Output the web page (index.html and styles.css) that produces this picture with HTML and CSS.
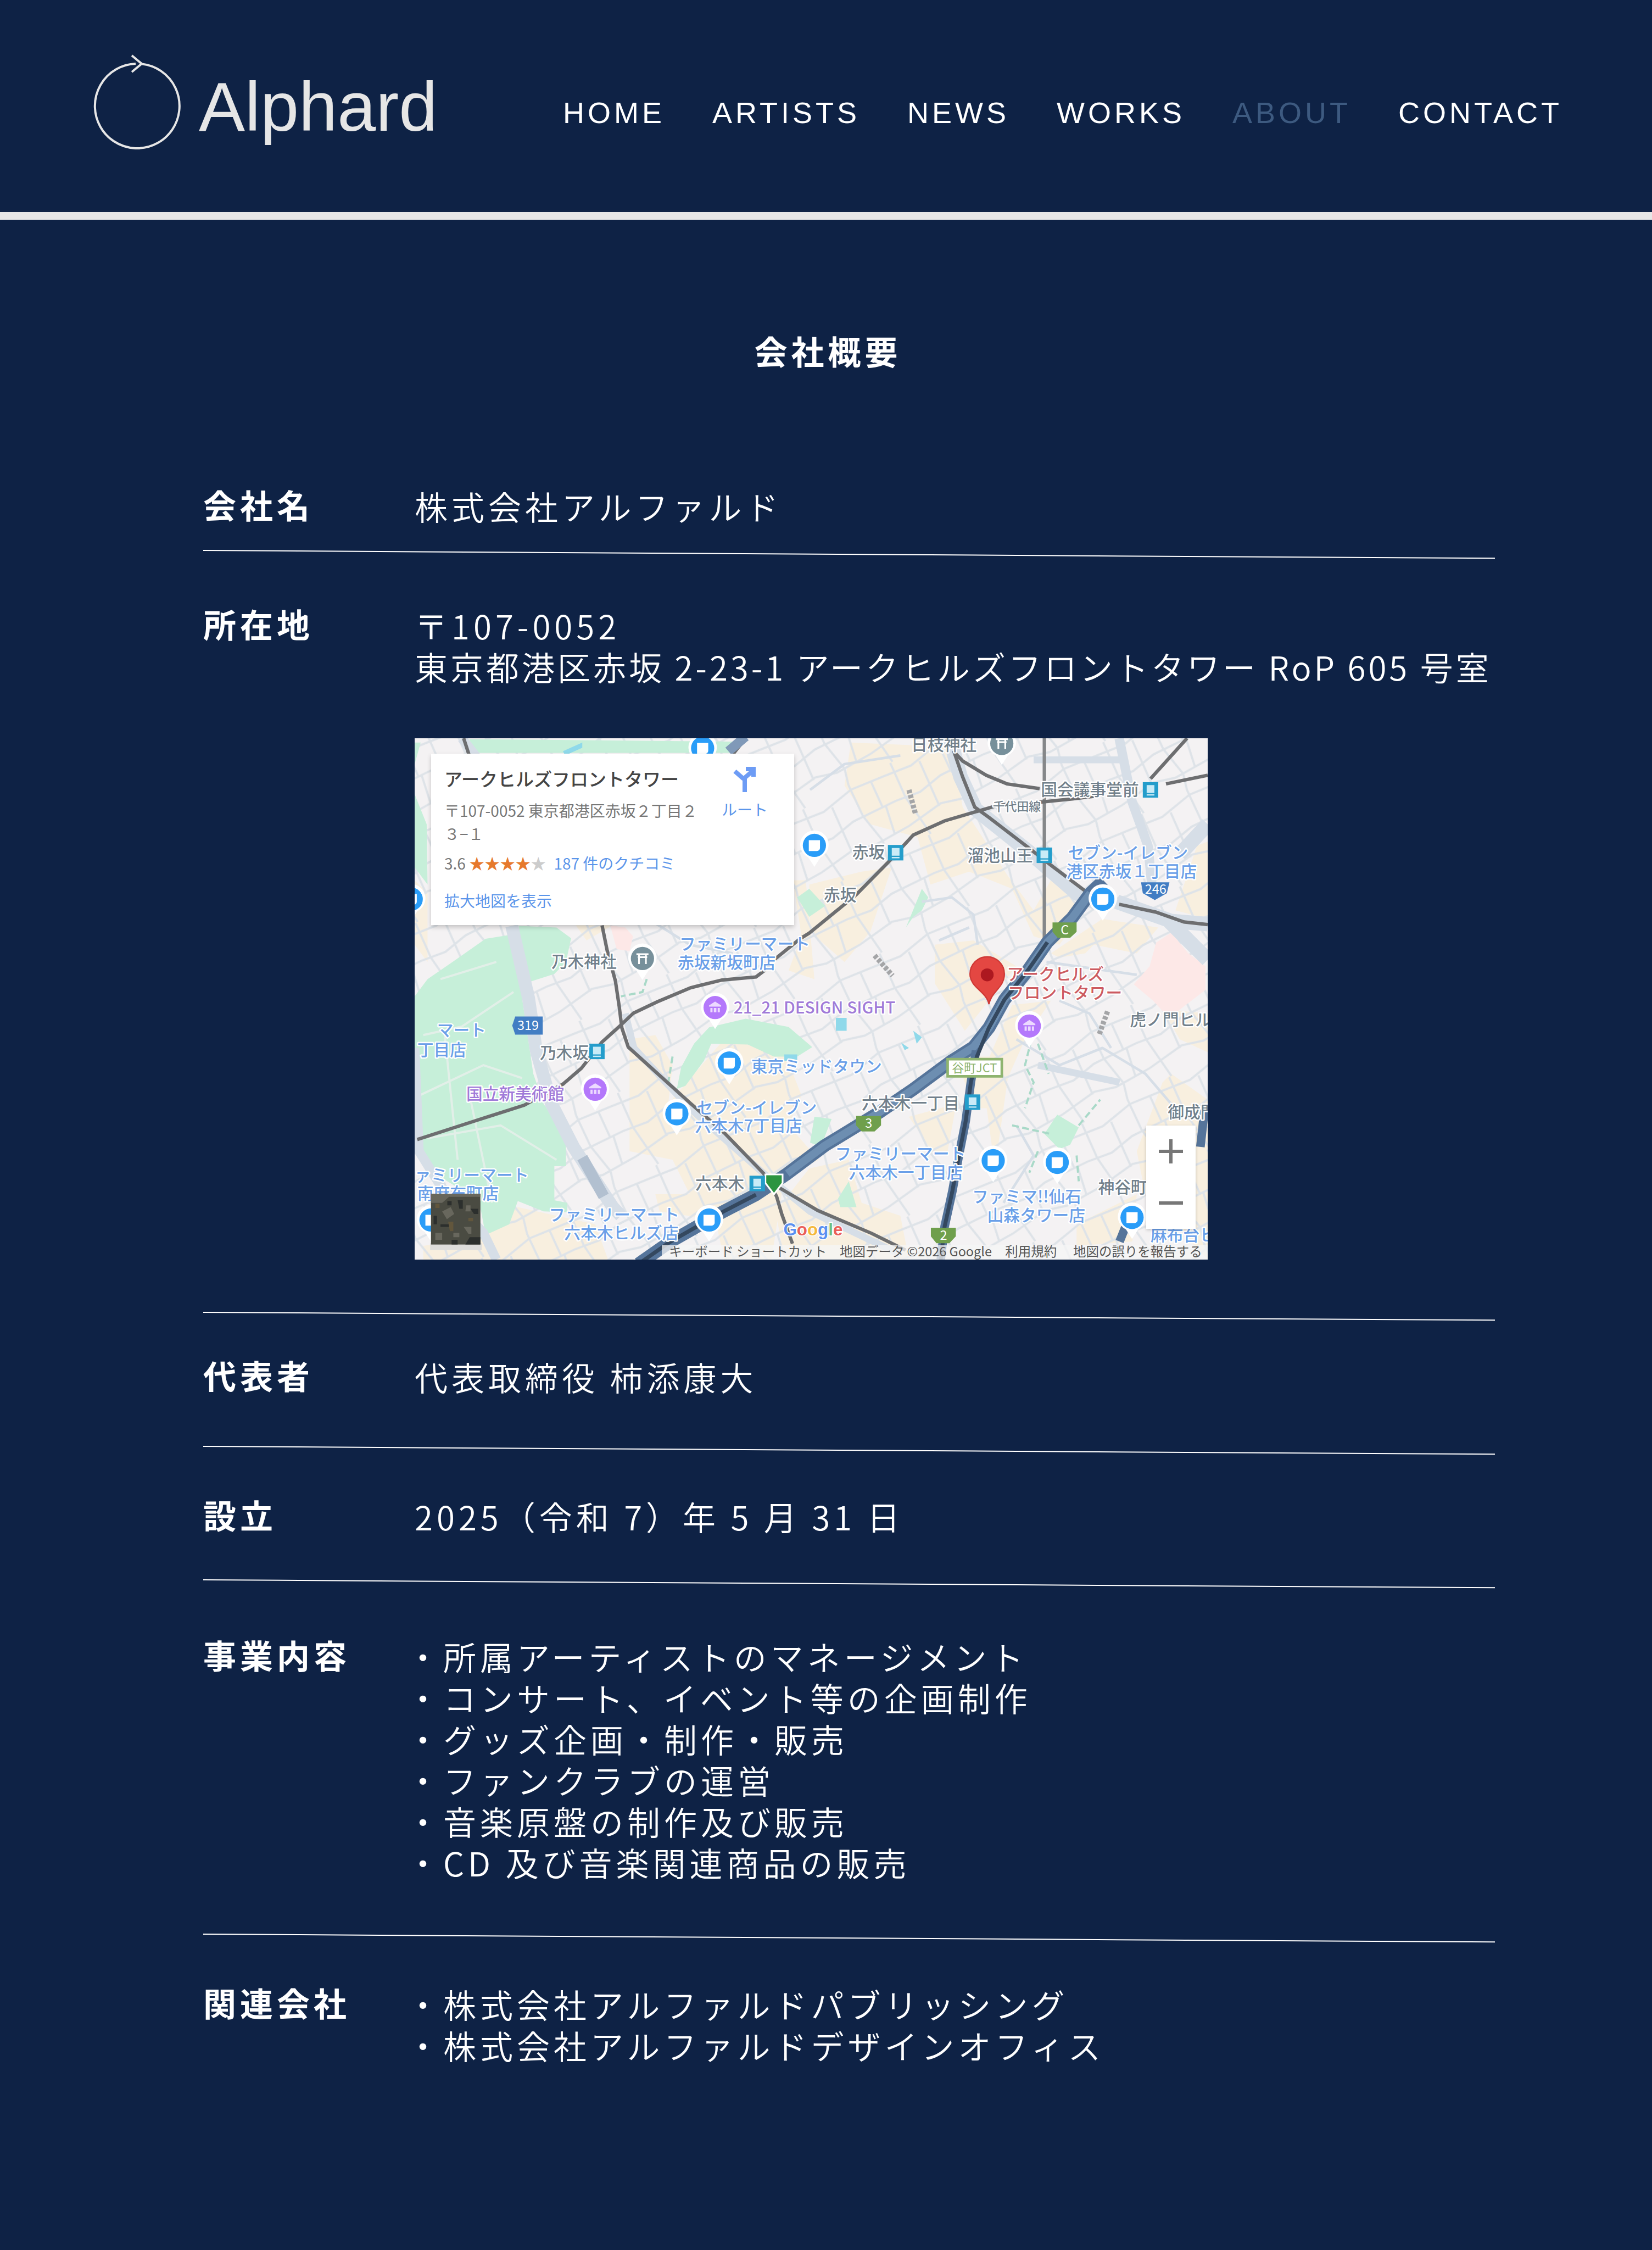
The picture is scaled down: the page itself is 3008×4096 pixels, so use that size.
FILE: index.html
```html
<!DOCTYPE html>
<html lang="ja">
<head>
<meta charset="utf-8">
<meta name="viewport" content="width=device-width, initial-scale=1">
<title>会社概要 | Alphard</title>
<link rel="stylesheet" href="styles.css">
</head>
<body>
<header class="header">
  <a class="logo" href="#">
    <svg class="logo-mark" viewBox="0 0 166 180" aria-hidden="true">
      <path d="M80 18A77 77 0 1 0 92 18.500"/>
      <path d="M73 3L91 18L73 33"/>
    </svg>
    <span class="logo-name">Alphard</span>
  </a>
  <nav class="nav">
    <a href="#">HOME</a>
    <a href="#">ARTISTS</a>
    <a href="#">NEWS</a>
    <a href="#">WORKS</a>
    <a class="current" href="#" aria-current="page">ABOUT</a>
    <a href="#">CONTACT</a>
  </nav>
</header>
<main class="main">
  <h1 class="title">会社概要</h1>
  <dl class="profile">
    <div class="row row-name">
      <dt>会社名</dt>
      <dd>株式会社アルファルド</dd>
    </div>
    <div class="row row-address">
      <dt>所在地</dt>
      <dd>
        <p>〒107-0052</p>
        <p class="street">東京都港区赤坂 2-23-1 アークヒルズフロントタワー RoP 605 号室</p>
        <figure class="map">
          <svg class="map-canvas" viewBox="0 0 1845 1212" preserveAspectRatio="none">
            <defs>
              <g id="pin">
                <path fill="#fff" d="M0 50L-14 28A33 33 0 1 1 14 28Z"/>
                <circle r="27"/>
              </g>
              <g id="shop"><use href="#pin" fill="#2a9df8"/><path fill="#fff" d="M-13 -12H13V6A7 7 0 0 1 6 13H-13Z"/></g>
              <g id="museum"><use href="#pin" fill="#b478fb"/><path fill="#ecd9ff" d="M-14 -5L0 -14L14 -5V-2H-14ZM-11 1H-6V11H-11ZM-3 1H3V11H-3ZM6 1H11V11H6Z"/></g>
              <g id="shrine"><use href="#pin" fill="#77909b"/><path stroke="#fff" stroke-width="4" fill="none" d="M-14 -10H14M-11 -3H11M-8 -10V13M8 -10V13"/></g>
              <g id="metro"><rect x="-18" y="-18" width="36" height="36" fill="#249dcb"/><path fill="#c9ebf7" d="M-9 -11H9V7H-9ZM-9 10H9V13H-9Z"/></g>
              <pattern id="blocks" width="230" height="190" patternUnits="userSpaceOnUse" patternTransform="rotate(-28)">
                <path d="M0 20L70 28L150 12L230 20M0 84L60 92L120 80L230 84M0 150L90 138L140 152L230 150M30 0L24 88L36 190M92 28L84 142M150 0L146 80L160 152L150 190M200 16L196 84M204 84L192 150" fill="none" stroke="#dee3e8" stroke-width="5"/>
              </pattern>
            </defs>
            <rect width="1845" height="1212" fill="#f4f2f3"/>
            <g fill="#f8efdf">
              <path d="M1015 10L1250 20L1275 160L1380 320L1440 400L1480 330L1560 400L1500 480L1440 460L1390 350L1290 310L1200 340L1170 230L1060 200L1000 110Z"/>
              <path d="M1480 500L1600 420L1730 440L1680 500L1580 480L1560 500L1500 510ZM1820 250L1845 240V420L1770 400Z"/>
              <path d="M918 340L1040 310L1110 300L1060 450L1000 520L920 450ZM1210 480L1300 470L1400 530L1280 680L1210 570Z"/>
              <path d="M880 330L910 330L930 560L870 540L900 460ZM375 435H460L400 470ZM0 330L30 360V520L0 480Z"/>
              <path d="M1390 620L1480 610L1420 700L1380 790L1350 1000L1320 780Z"/>
              <path d="M500 700L560 690L600 760L590 850L720 700L860 730L900 830L870 900L940 980L860 1020L830 1212H720L700 1120L570 1100L560 1060L640 1060L600 980L500 960Z"/>
              <path d="M918 1000L1010 980L1040 1080L1130 1110L1150 1212H860L840 1100ZM1150 880L1260 850L1240 960L1210 970ZM1260 740L1340 740L1350 860H1300Z"/>
              <path d="M160 1160L240 1090L330 1110L420 1130L450 1212H20V1180ZM1740 630L1845 640V730L1780 700ZM1760 780L1845 840V1212L1700 1060L1680 960L1740 800ZM1540 1130L1680 1060L1670 1170L1540 1180Z"/>
            </g>
            <rect width="1845" height="1212" fill="url(#blocks)"/>
            <path fill="#fde8e7" d="M1760 452L1800 500L1840 530V585L1755 650L1718 610L1673 572L1710 530L1725 475ZM455 435L490 440L508 460L500 495L470 490Z"/>
            <g fill="#c6efd9">
              <path d="M127 2L770 8L745 34H140ZM0 10L14 10L0 60ZM0 130L28 200L30 340L0 300Z"/>
              <path d="M88 520L165 466L235 455L250 604L276 780L300 850L352 925V995H325V1074L355 1080V1102L300 1100L240 1076L220 1130L165 1155L150 1075L60 1020L12 975L12 780L0 740V600L30 560Z"/>
              <path d="M242 436L330 440L364 465L352 520L325 548L262 568L248 490Z"/>
              <path d="M610 815L620 765L650 710L685 672L770 652L870 671L925 718L890 740L836 740L775 712L690 710L673 750L630 808Z"/>
              <path d="M1143 440L1180 350L1195 370L1180 400L1160 415ZM890 370L918 350L955 390L918 415ZM930 880L970 885L945 950L920 940ZM1465 920L1495 875L1545 905L1525 945L1500 955ZM985 1070L1010 1030L1028 1090L990 1090Z"/>
            </g>
            <g fill="none" stroke="#e2efe8" stroke-width="5">
              <path d="M20 690L110 670L230 590M70 690L100 980M12 830L160 760L250 790M130 840L180 1080M30 930L200 900L330 980M60 560L190 520"/>
            </g>
            <g fill="none" stroke="#d6dee7" stroke-linejoin="round">
              <path stroke-width="30" d="M226 436L265 604L283 726L318 849L370 951L461 1090L480 1110"/>
              <path stroke-width="22" d="M110 0L145 45M0 720L10 960L60 1040L160 1150L190 1212M1639 0L1669 147L1706 250L1715 340"/>
              <path stroke-width="34" d="M1245 0L1270 90L1305 165L1430 265L1540 360L1590 385M1633 380L1760 425L1845 432M1755 425L1845 515M1845 200L1780 270"/>
              <path stroke-width="16" d="M490 640L510 720L640 860L810 1010L920 1100L1130 1200M1440 50H1640M1450 760L1640 800"/>
              <path stroke-width="6" d="M1180 380L1250 370L1300 410L1310 480M1220 470L1290 440M1470 520L1680 550M1400 700L1500 760L1600 720L1700 780L1760 850M1500 610L1570 640L1620 720M1400 900L1440 970L1370 1080M560 430L640 480L740 500M640 70L700 160M920 120L1000 60L1130 40"/>
            </g>
            <g fill="none" stroke="#a9d9c8" stroke-width="5" stroke-dasharray="16 8">
              <path d="M1435 700L1420 760L1440 800L1420 860M1450 710L1475 780M1390 900L1480 920M1545 900L1595 840M1450 960L1430 1010M1540 970L1545 1030M540 560L530 590L480 600M600 740L590 800"/>
            </g>
            <path fill="#8fd9ea" d="M980 650H1005V680H980ZM1160 680L1180 695L1168 710ZM1132 708L1150 720L1140 725ZM345 30L390 10V22L350 40ZM860 735H890V750H860Z"/>
            <g fill="none" stroke="#6d6e70" stroke-width="8">
              <path d="M1465 0V480" stroke="#858789"/>
              <path d="M1254 29L1275 90L1303 160L1336 184L1421 249L1484 298L1560 355M1639 386L1724 404L1790 427L1845 433"/>
              <path d="M1258 35L1275 53L1330 86L1378 106L1454 117M1748 106L1845 86M1712 94L1797 0"/>
              <path d="M1580 135L1530 141L1451 149L1360 155L1233 192L1160 225L1100 290L1027 364L918 453L897 466L830 520L815 539L794 555L715 562L642 580L564 613L509 639L473 673L436 706L388 767L345 804L255 853L139 890L6 933"/>
              <path d="M436 435L448 494L467 564L476 624L482 673L497 718L570 784L642 849L721 918L812 1012L842 1065L854 1106L879 1175"/>
              <path d="M840 1040L938 1098L985 1118L1063 1151L1142 1190M114 0L127 40M770 0L730 50"/>
            </g>
            <g fill="none" stroke="#55749a" stroke-linejoin="round">
              <path stroke-width="30" d="M1603 331L1572 360L1530 417L1472 474L1427 539L1372 608L1336 673L1300 718L1248 751L1160 816L1082 869L954 947L867 1012L794 1061L715 1102L594 1171L521 1222"/>
              <path stroke="#6d8eb1" stroke-width="18" d="M1572 360L1530 417L1472 474L1427 539L1372 608L1336 673L1300 718L1248 751L1160 816L1082 869L954 947L867 1012"/>
              <path stroke-width="20" d="M1306 726L1294 800L1282 890L1266 971L1251 1053L1233 1135L1224 1212M1838 860L1828 950M1660 1120L1640 1170"/>
              <path stroke="#34485f" stroke-width="9" d="M1472 474L1427 539L1372 608L1336 673L1308 740L1294 800L1282 890L1266 971L1251 1053L1233 1135L1224 1212M794 1061L715 1102L594 1171L521 1222"/>
              <path stroke="#8099b8" stroke-width="22" d="M770 -4L730 30"/>
              <path stroke="#b2c0d0" stroke-width="26" d="M390 975L440 1065"/>
            </g>
            <g fill="#6f9f4c">
              <path d="M1484 428H1540V450L1525 464H1496L1484 450ZM1027 878H1085V900L1070 914H1040L1027 900ZM1201 1138H1259V1158L1244 1174H1214L1201 1158Z"/>
            </g>
            <path fill="#fff" stroke="#8fb46f" stroke-width="6" d="M1240 746H1366V786H1240Z"/>
            <path fill="#427dc3" d="M234 647H298V689H234L227 668ZM1690 335H1756L1750 360L1722 376L1694 360Z"/>
            <path fill="#2c9440" stroke="#fff" stroke-width="4" d="M816 1014H856V1034L836 1060L816 1034Z"/>

            <g class="tag">
              <text x="1503" y="456">C</text><text x="1048" y="906">3</text><text x="1222" y="1166">2</text>
              <text x="239" y="678">319</text><text x="1699" y="361">246</text>
              <text class="tag-green" x="1250" y="776">谷町JCT</text>
            </g>

            <use href="#shop" x="670" y="23"/><use href="#shop" x="930" y="249"/><use href="#shop" x="1601" y="374"/>
            <use href="#shop" x="732" y="755"/><use href="#shop" x="610" y="873"/><use href="#shop" x="685" y="1120"/>
            <use href="#shop" x="1346" y="982"/><use href="#shop" x="1495" y="986"/><use href="#shop" x="1669" y="1114"/>
            <use href="#shop" x="-8" y="374"/><use href="#shop" x="38" y="1120"/>
            <use href="#museum" x="699" y="626"/><use href="#museum" x="420" y="816"/><use href="#museum" x="1430" y="669"/>
            <use href="#shrine" x="530" y="512"/><use href="#shrine" x="1366" y="12"/>
            <use href="#metro" x="1712" y="120"/><use href="#metro" x="1119" y="266"/><use href="#metro" x="1465" y="272"/>
            <use href="#metro" x="424" y="728"/><use href="#metro" x="797" y="1035"/><use href="#metro" x="1298" y="846"/>

            <g class="label label-place">
              <text x="1457" y="133">国会議事堂前</text><text x="1018" y="279">赤坂</text><text x="1286" y="286">溜池山王</text>
              <text x="1155" y="28">日枝神社</text><text x="318" y="533">乃木神社</text><text x="291" y="744">乃木坂</text>
              <text x="653" y="1048">六本木</text><text x="1040" y="862">六本木一丁目</text><text x="1664" y="668">虎ノ門ヒルズ</text>
              <text x="1752" y="882">御成門</text><text x="1590" y="1057">神谷町</text><text x="952" y="378">赤坂</text>
              <text class="line-name" x="1345" y="168">千代田線</text>
            </g>
            <g class="label label-shop">
              <text x="616" y="492">ファミリーマート</text><text x="612" y="535">赤坂新坂町店</text>
              <text x="1520" y="280">セブン-イレブン</text><text x="1516" y="323">港区赤坂１丁目店</text>
              <text x="52" y="692">マート</text><text x="6" y="738">丁目店</text>
              <text x="783" y="777">東京ミッドタウン</text>
              <text x="656" y="872">セブン-イレブン</text><text x="652" y="915">六本木7丁目店</text>
              <text x="0" y="1029">ァミリーマート</text><text x="6" y="1072">南麻布町店</text>
              <text x="312" y="1121">ファミリーマート</text><text x="348" y="1164">六本木ヒルズ店</text>
              <text x="978" y="980">ファミリーマート</text><text x="1010" y="1023">六本木一丁目店</text>
              <text x="1297" y="1079">ファミマ!!仙石</text><text x="1332" y="1122">山森タワー店</text>
              <text x="1712" y="1168">麻布台ヒルズ</text>
            </g>
            <g class="label label-museum">
              <text x="742" y="640">21_21 DESIGN SIGHT</text><text x="120" y="840">国立新美術館</text>
            </g>
            <g class="label label-main">
              <text x="1378" y="562">アークヒルズ</text><text x="1380" y="605">フロントタワー</text>
            </g>
            <path fill="#e44742" stroke="#cf3a36" stroke-width="3" d="M1336 618C1330 588 1292 580 1292 548A40 40 0 0 1 1372 548C1372 580 1342 588 1336 618Z"/>
            <circle cx="1332" cy="550" r="15" fill="#ad1820"/>
            <path stroke="#a4a5a7" stroke-width="12" stroke-dasharray="8 4" d="M1070 505L1112 552M1612 635L1592 690M1150 120L1165 175"/>
            <text class="google" x="858" y="1156"><tspan fill="#5a8ff0">G</tspan><tspan fill="#ea5f58">o</tspan><tspan fill="#f5b93c">o</tspan><tspan fill="#5a8ff0">g</tspan><tspan fill="#6cbf80">l</tspan><tspan fill="#ea5f58">e</tspan></text>
            <rect x="575" y="1178" width="1270" height="34" fill="#f5f5f5" opacity=".75"/>
            <g class="credit">
              <text x="592" y="1204">キーボード ショートカット</text><text x="989" y="1204">地図データ ©2026 Google</text>
              <text x="1374" y="1204">利用規約</text><text x="1532" y="1204">地図の誤りを報告する</text>
            </g>
            <g>
              <rect x="36" y="1174" width="120" height="16" fill="#dddcda"/>
              <rect x="38" y="1059" width="115" height="118" fill="#4a4b42"/>
              <path fill="#68675d" d="M38 1059H153V1066H80L64 1080H38ZM64 1100L84 1090L92 1106L75 1118ZM114 1136H132V1152H125ZM48 1150H64V1166H48ZM120 1086H130V1100H118ZM90 1150H104V1160H90Z"/>
              <path fill="#2c2f2d" d="M100 1074H112V1094H104ZM130 1094H148V1106H138ZM60 1130H84V1136H60ZM128 1160H153V1177H118ZM44 1110H52V1130H44ZM76 1076H86V1086H76ZM86 1166H100V1177H86Z"/>
              <path fill="#62563c" d="M78 1124H90V1146H82ZM125 1115H136V1123H125ZM48 1082H58V1092H48Z"/>
            </g>
          </svg>
          <div class="place-card">
            <div class="place-info">
              <strong>アークヒルズフロントタワー</strong>
              <span class="place-address">〒107-0052 東京都港区赤坂２丁目２３−１</span>
              <span class="place-rating">3.6 <span class="stars">★★★★<i>★</i></span> <a href="#">187 件のクチコミ</a></span>
              <a class="place-more" href="#">拡大地図を表示</a>
            </div>
            <a class="route" href="#">
              <svg viewBox="0 0 44 46" aria-hidden="true"><path d="M22 46V20L38 6M38 18V4H24M4 8L20 22" fill="none" stroke="#6d9cf5" stroke-width="8"/></svg>
              ルート
            </a>
          </div>
          <div class="zoom">
            <button type="button" aria-label="拡大"><svg viewBox="0 0 44 44"><path d="M22 0V44M0 22H44"/></svg></button>
            <button type="button" aria-label="縮小"><svg viewBox="0 0 44 44"><path d="M0 22H44"/></svg></button>
          </div>
        </figure>
      </dd>
    </div>
    <div class="row row-president">
      <dt>代表者</dt>
      <dd>代表取締役 柿添康大</dd>
    </div>
    <div class="row row-founded">
      <dt>設立</dt>
      <dd>2025（令和 7）年 5 月 31 日</dd>
    </div>
    <div class="row row-business">
      <dt>事業内容</dt>
      <dd>
        <ul class="items">
          <li>・所属アーティストのマネージメント</li>
          <li>・コンサート、イベント等の企画制作</li>
          <li>・グッズ企画・制作・販売</li>
          <li>・ファンクラブの運営</li>
          <li>・音楽原盤の制作及び販売</li>
          <li>・CD 及び音楽関連商品の販売</li>
        </ul>
      </dd>
    </div>
    <div class="row row-related">
      <dt>関連会社</dt>
      <dd>
        <ul class="items">
          <li>・株式会社アルファルドパブリッシング</li>
          <li>・株式会社アルファルドデザインオフィス</li>
        </ul>
      </dd>
    </div>
  </dl>
</main>
</body>
</html>
```
FILE: styles.css
```css
* {
  box-sizing: border-box;
}

body {
  margin: 0;
  min-height: 100vh;
  background: #0e2245;
  color: #fff;
  font-family: "Noto Sans CJK JP", sans-serif;
  font-size: 60px;
  line-height: 75px;
}

p,
dl,
dd,
ul,
figure {
  margin: 0;
  padding: 0;
}

a {
  color: inherit;
  text-decoration: none;
}

/* Header */

.header {
  display: flex;
  align-items: flex-start;
  justify-content: space-between;
  height: 400px;
  padding: 98px 163px 0 167px;
  border-bottom: 14px solid #e6e6e6;
  font-family: "Liberation Sans", Arial, sans-serif;
}

.logo {
  display: flex;
  gap: 29px;
  color: #e6e6e6;
}

.logo-mark {
  width: 166px;
  height: 180px;
  fill: none;
  stroke: currentColor;
  stroke-width: 4px;
}

.logo-name {
  padding-top: 27px;
  font-size: 126px;
  line-height: 140px;
}

.nav {
  display: flex;
  gap: 86px;
  padding-top: 74px;
  font-size: 54px;
  line-height: 66px;
  letter-spacing: 6px;
}

.nav .current {
  color: #3d5a80;
}

/* Company profile */

.main {
  padding-bottom: 330px;
}

.title {
  margin: 200px 0 208px;
  padding-left: 7px;
  text-align: center;
  font-size: 60px;
  font-weight: 700;
  letter-spacing: 7px;
}

.profile {
  padding: 0 286px 0 370px;
  letter-spacing: 7px;
}

.row {
  display: grid;
  grid-template-columns: 385px 1fr;
}

.row dt {
  font-weight: 700;
  line-height: 69px;
}

.row dd {
  min-width: 0;
  font-weight: 350;
  white-space: nowrap;
}

.row:not(:last-child)::after {
  content: "";
  grid-column: 1 / -1;
  height: 2px;
  background: #fff;
  transform: skewY(0.35deg);
  transform-origin: left;
}

.row-name {
  row-gap: 43px;
}

.row-address {
  row-gap: 95px;
  padding-top: 97px;
}

.street {
  letter-spacing: 5px;
}

.row-president {
  row-gap: 89px;
  padding-top: 78px;
}

.row-founded {
  row-gap: 78px;
  padding-top: 88px;
}

.row-business {
  row-gap: 93px;
  padding-top: 100px;
}

.row-related {
  padding-top: 88px;
}

.items {
  list-style: none;
}

.items li {
  text-indent: -15px;
}

/* Map */

.map {
  position: relative;
  width: 73%;
  aspect-ratio: 1444 / 949;
  min-width: 1444px;
  margin-top: 94px;
  overflow: hidden;
  letter-spacing: 0;
  font-weight: 400;
}

.map-canvas {
  display: block;
  width: 100%;
  height: 100%;
}

.label text {
  font-size: 38px;
  font-weight: 500;
  paint-order: stroke;
  stroke: #fff;
  stroke-width: 6px;
  stroke-linejoin: round;
}

.label-place {
  fill: #71808b;
}

.label .line-name {
  font-size: 28px;
}

.label-shop {
  fill: #6a9fe8;
}

.label-museum {
  fill: #a07ad8;
}

.label-main {
  fill: #cc5a60;
}

.tag {
  fill: #fff;
  font-size: 30px;
}

.tag-green {
  fill: #8fb46f;
  font-size: 28px;
}

.google {
  font-family: "Liberation Sans", Arial, sans-serif;
  font-size: 40px;
  font-weight: 700;
  paint-order: stroke;
  stroke: #fff;
  stroke-width: 4px;
}

.credit {
  fill: #555;
  font-size: 30px;
}

.place-card {
  position: absolute;
  top: 28px;
  left: 30px;
  display: flex;
  justify-content: space-between;
  width: 661px;
  height: 312px;
  padding: 24px 48px 20px 24px;
  background: #fff;
  box-shadow: 0 4px 8px rgba(0, 0, 0, 0.2);
  color: #777;
  font-size: 28px;
  line-height: 42px;
  white-space: normal;
}

.place-info {
  display: flex;
  flex-direction: column;
  width: 480px;
}

.place-info strong {
  margin-bottom: 16px;
  color: #444;
  font-size: 33px;
  font-weight: 500;
}

.place-info a,
.route {
  color: #5b95ea;
}

.place-rating {
  margin: 12px 0 26px;
}

.place-rating a {
  margin-left: 8px;
}

.stars {
  color: #e6792c;
}

.stars i {
  color: #ccc;
  font-style: normal;
}

.route {
  display: flex;
  flex-direction: column;
  align-items: center;
  gap: 10px;
}

.route svg {
  width: 44px;
  height: 46px;
}

.zoom {
  position: absolute;
  right: 22px;
  bottom: 56px;
  display: flex;
  flex-direction: column;
  width: 90px;
  height: 188px;
  background: #fff;
  box-shadow: 0 2px 6px rgba(0, 0, 0, 0.2);
}

.zoom button {
  display: grid;
  flex: 1;
  place-items: center;
  padding: 0;
  border: 0;
  background: none;
}

.zoom svg {
  width: 44px;
  height: 44px;
  fill: none;
  stroke: #777;
  stroke-width: 6px;
}
```
